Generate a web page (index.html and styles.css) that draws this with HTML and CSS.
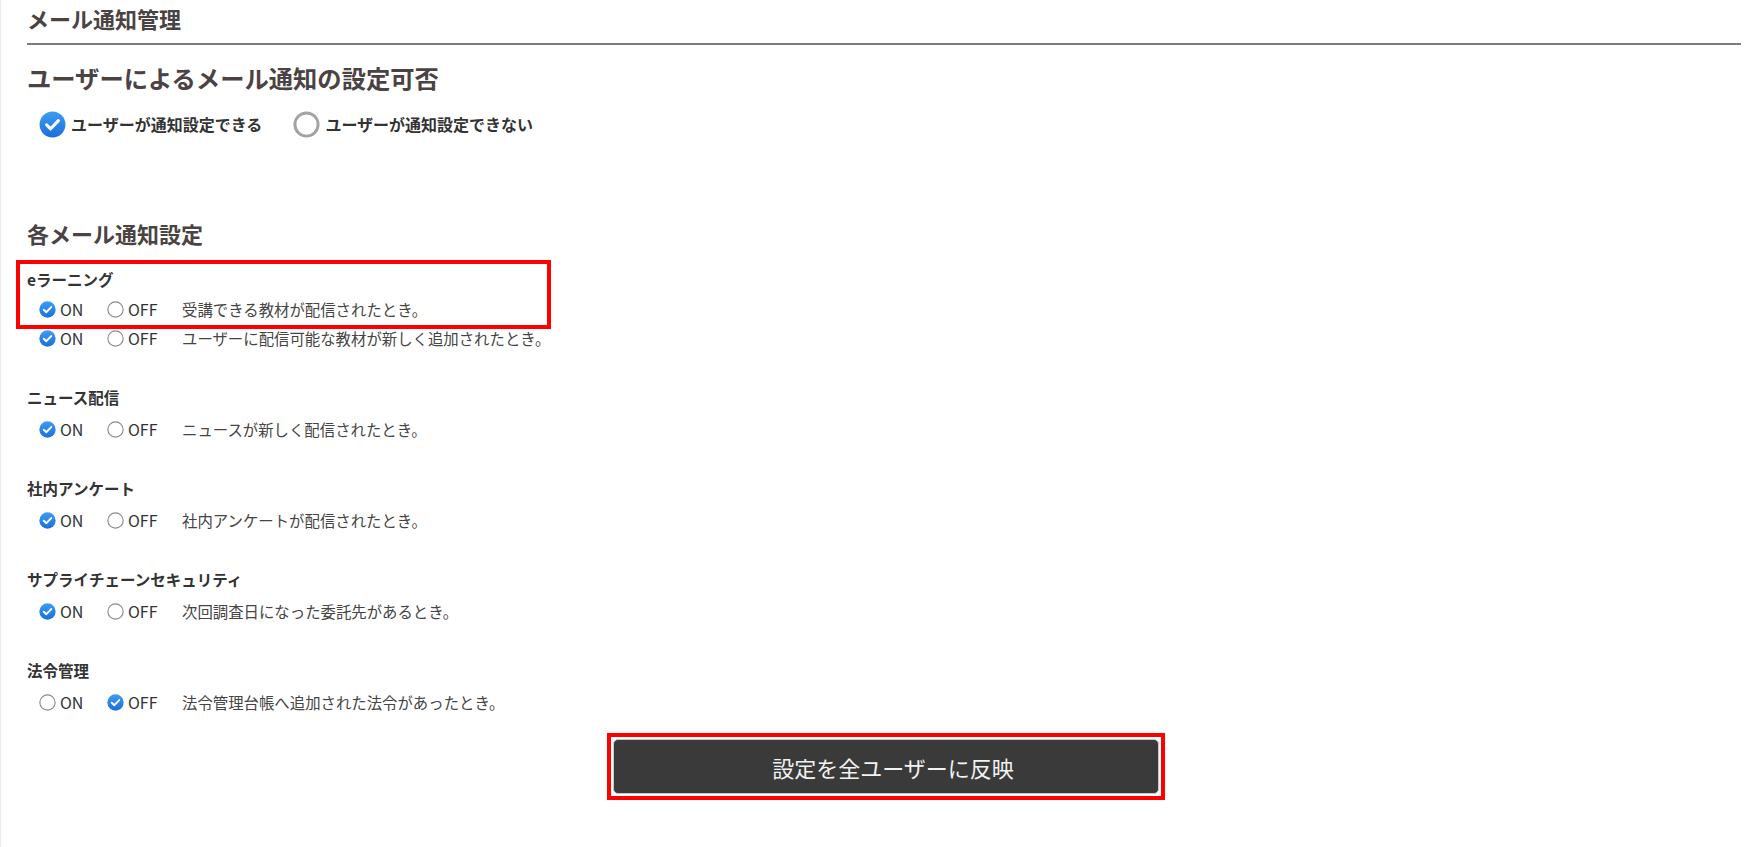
FILE: index.html
```html
<!DOCTYPE html>
<html lang="ja">
<head>
    <meta charset="UTF-8">
    <meta name="viewport" content="width=device-width, initial-scale=1.0">
    <title>メール通知管理</title>
    <link rel="stylesheet" href="styles.css">
</head>
<body>
    <!-- radio icons, reused below with <use> -->
    <svg class="sprite" aria-hidden="true">
        <defs>
            <linearGradient id="radioBlue" x1="0" y1="0" x2="0" y2="1">
                <stop offset="0" stop-color="#3d9cf5"/>
                <stop offset="1" stop-color="#1a6fdc"/>
            </linearGradient>
            <symbol id="radio-on" viewBox="0 0 24 24">
                <circle cx="12" cy="12" r="11.5" fill="url(#radioBlue)"/>
                <path d="M6.8 12.4 L10.4 15.8 L17.2 8.6" fill="none" stroke="#fff" stroke-width="2.8" stroke-linecap="round" stroke-linejoin="round"/>
            </symbol>
            <symbol id="radio-off-lg" viewBox="0 0 24 24">
                <circle cx="12" cy="12" r="10.3" fill="#fff" stroke="#a3a3a3" stroke-width="2.6"/>
            </symbol>
            <symbol id="radio-off" viewBox="0 0 24 24">
                <circle cx="12" cy="12" r="10.8" fill="#fff" stroke="#8c8c8c" stroke-width="1.6"/>
            </symbol>
        </defs>
    </svg>

    <div class="page">
        <h1 class="page-title">メール通知管理</h1>

        <section class="permission">
            <h2 class="section-title">ユーザーによるメール通知の設定可否</h2>
            <div class="choice-row">
                <label class="choice">
                    <svg class="choice-icon"><use href="#radio-on"/></svg>
                    ユーザーが通知設定できる
                </label>
                <label class="choice">
                    <svg class="choice-icon"><use href="#radio-off-lg"/></svg>
                    ユーザーが通知設定できない
                </label>
            </div>
        </section>

        <section class="notify">
            <h2 class="section-title">各メール通知設定</h2>

            <div class="notify-group">
                <div class="highlight">
                    <div class="notify-label">eラーニング</div>
                    <div class="notify-row">
                        <span class="opt opt-on"><svg class="opt-icon"><use href="#radio-on"/></svg>ON</span>
                        <span class="opt opt-off"><svg class="opt-icon"><use href="#radio-off"/></svg>OFF</span>
                        <span class="notify-desc">受講できる教材が配信されたとき。</span>
                    </div>
                </div>
                <div class="notify-row tight">
                    <span class="opt opt-on"><svg class="opt-icon"><use href="#radio-on"/></svg>ON</span>
                    <span class="opt opt-off"><svg class="opt-icon"><use href="#radio-off"/></svg>OFF</span>
                    <span class="notify-desc">ユーザーに配信可能な教材が新しく追加されたとき。</span>
                </div>
            </div>

            <div class="notify-group">
                <div class="notify-label">ニュース配信</div>
                <div class="notify-row">
                    <span class="opt opt-on"><svg class="opt-icon"><use href="#radio-on"/></svg>ON</span>
                    <span class="opt opt-off"><svg class="opt-icon"><use href="#radio-off"/></svg>OFF</span>
                    <span class="notify-desc">ニュースが新しく配信されたとき。</span>
                </div>
            </div>

            <div class="notify-group">
                <div class="notify-label">社内アンケート</div>
                <div class="notify-row">
                    <span class="opt opt-on"><svg class="opt-icon"><use href="#radio-on"/></svg>ON</span>
                    <span class="opt opt-off"><svg class="opt-icon"><use href="#radio-off"/></svg>OFF</span>
                    <span class="notify-desc">社内アンケートが配信されたとき。</span>
                </div>
            </div>

            <div class="notify-group">
                <div class="notify-label">サプライチェーンセキュリティ</div>
                <div class="notify-row">
                    <span class="opt opt-on"><svg class="opt-icon"><use href="#radio-on"/></svg>ON</span>
                    <span class="opt opt-off"><svg class="opt-icon"><use href="#radio-off"/></svg>OFF</span>
                    <span class="notify-desc">次回調査日になった委託先があるとき。</span>
                </div>
            </div>

            <div class="notify-group">
                <div class="notify-label">法令管理</div>
                <div class="notify-row">
                    <span class="opt opt-on"><svg class="opt-icon"><use href="#radio-off"/></svg>ON</span>
                    <span class="opt opt-off"><svg class="opt-icon"><use href="#radio-on"/></svg>OFF</span>
                    <span class="notify-desc">法令管理台帳へ追加された法令があったとき。</span>
                </div>
            </div>
        </section>

        <div class="apply">
            <div class="apply-frame">
                <button class="apply-btn" type="button">設定を全ユーザーに反映</button>
            </div>
        </div>
    </div>
</body>
</html>
```

FILE: styles.css
```css
body {
    margin: 0;
    padding: 0;
    background-color: #ffffff;
    font-family: "Noto Sans CJK JP", "Noto Sans", sans-serif;
    color: #333333;
}
.sprite {
    position: absolute;
    width: 0;
    height: 0;
    overflow: hidden;
}
.page {
    min-height: 100vh;
    box-sizing: border-box;
    padding: 0 9px 0 26px;
    border-left: 1px solid #ececec;
}

/* headings */
.page-title {
    margin: 0;
    padding-bottom: 6px;
    font-size: 22px;
    line-height: 37px;
    font-weight: bold;
    color: #4b4343;
    border-bottom: 2px solid #7d7d7d;
}
.section-title {
    margin: 0;
    font-size: 22px;
    line-height: 30px;
    font-weight: bold;
    color: #4b4343;
}
.permission .section-title {
    margin-top: 18px;
    font-size: 24.3px;
}

/* user permission radios */
.choice-row {
    display: flex;
    align-items: center;
    height: 28px;
    margin-top: 17px;
    padding-left: 12px;
}
.choice {
    display: flex;
    align-items: center;
    gap: 5px;
    font-size: 16px;
    font-weight: bold;
    color: #333333;
    cursor: pointer;
}
.choice + .choice {
    margin-left: 31px;
}
.choice-icon {
    width: 27px;
    height: 27px;
}

/* per-feature notification settings */
.notify .section-title {
    margin-top: 80px;
}
.notify-group {
    margin-top: 39px;
}
.notify .section-title + .notify-group {
    margin-top: 16px;
}
.highlight {
    width: 527px;
    margin-left: -7px;
    padding: 5px 7px 6px;
    box-sizing: border-box;
    box-shadow: 0 0 0 4px #ff0000;
}
.notify-label {
    font-size: 15.5px;
    line-height: 20px;
    font-weight: bold;
    color: #333333;
}
.notify-row {
    display: flex;
    align-items: center;
    height: 20px;
    margin-top: 12px;
    padding-left: 12px;
    font-size: 16px;
}
.highlight .notify-row {
    margin-top: 10px;
}
.notify-row.tight {
    margin-top: 3px;
}
.opt {
    display: flex;
    align-items: center;
    gap: 4px;
    color: #333333;
}
.opt-on {
    width: 68px;
}
.opt-off {
    width: 75px;
}
.opt-icon {
    width: 17px;
    height: 17px;
}
.notify-desc {
    font-size: 15.4px;
    color: #444444;
}

/* apply button */
.apply {
    margin-top: 25px;
    padding-left: 584px;
}
.apply-frame {
    display: inline-flex;
    padding: 2px;
    background-color: #ffffff;
    box-shadow: 0 0 0 4px #ff0000;
}
.apply-btn {
    width: 546px;
    height: 55px;
    padding: 0 0 0 14px;
    background-color: #3a3a3a;
    color: #f2f2f2;
    border: 1px solid #c8c8c8;
    border-radius: 5px;
    font-family: "Noto Sans CJK JP", "Noto Sans", sans-serif;
    font-size: 22px;
    cursor: pointer;
}
```
